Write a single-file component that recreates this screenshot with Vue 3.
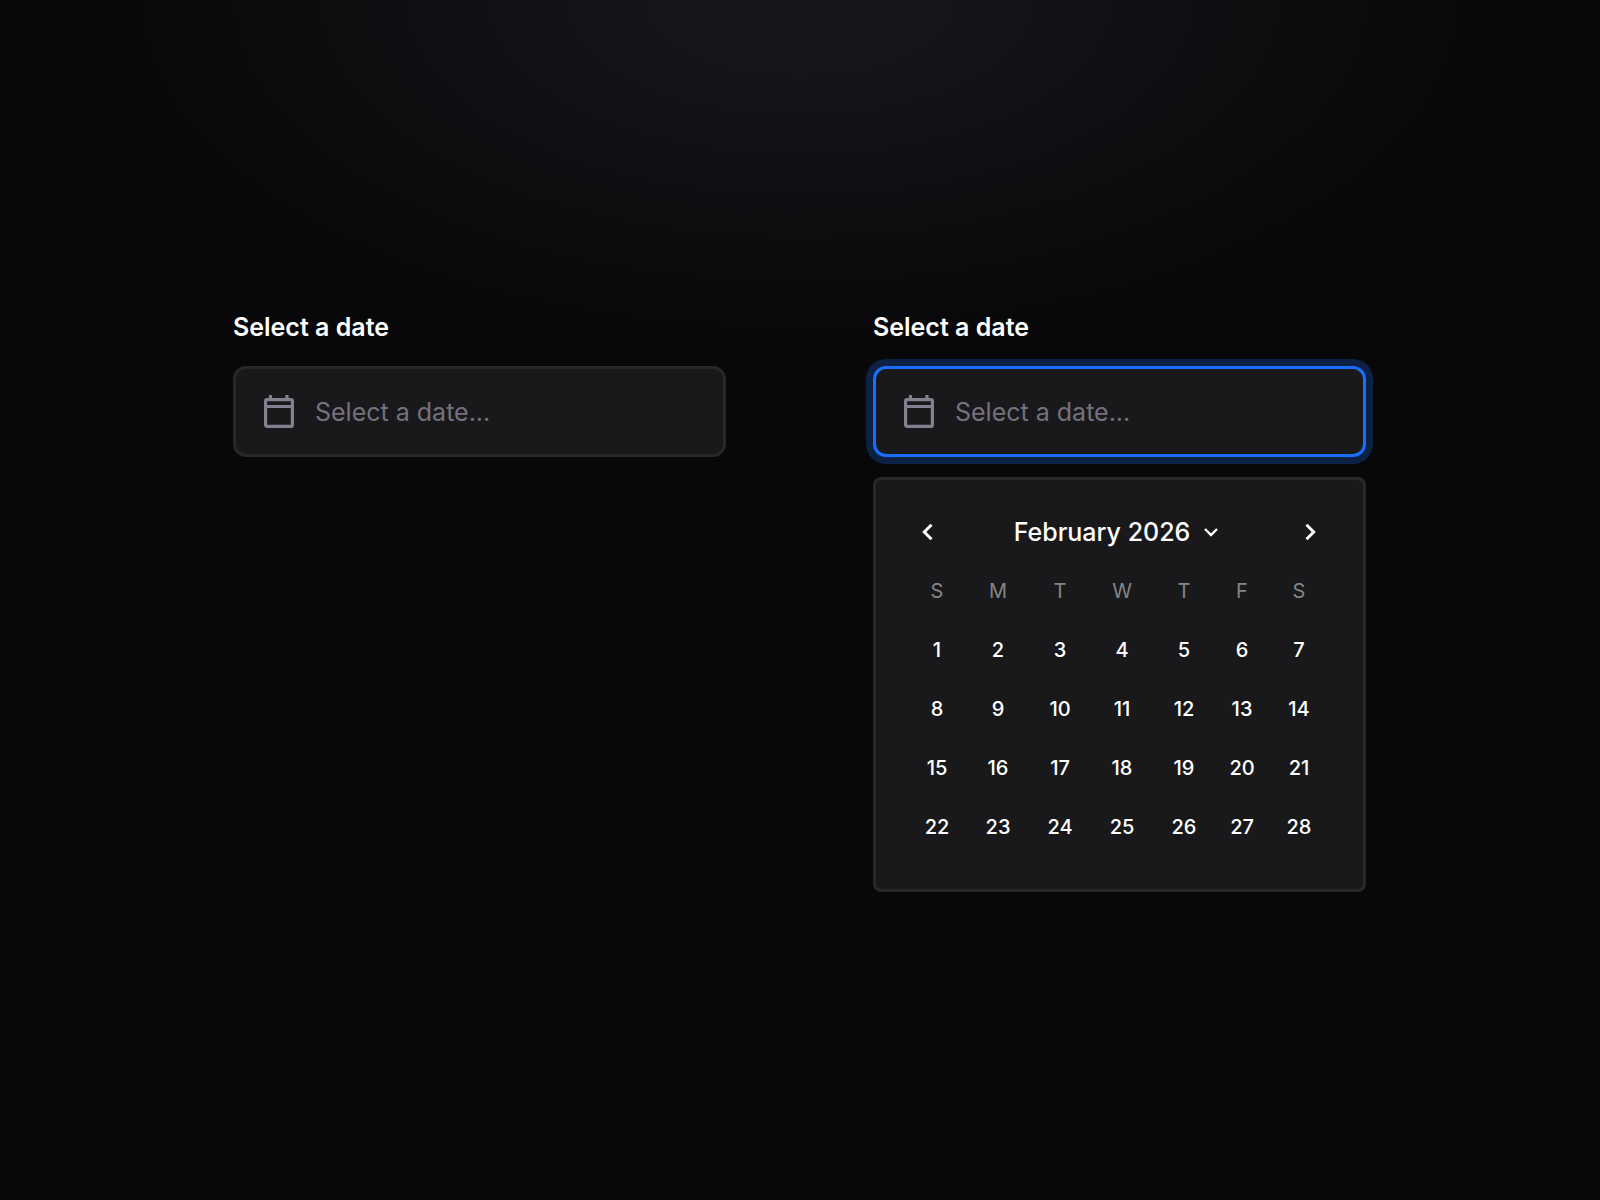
<script setup>
const weekdays = [
  { short: 'S', name: 'Sunday' },
  { short: 'M', name: 'Monday' },
  { short: 'T', name: 'Tuesday' },
  { short: 'W', name: 'Wednesday' },
  { short: 'T', name: 'Thursday' },
  { short: 'F', name: 'Friday' },
  { short: 'S', name: 'Saturday' },
]

const weeks = Array.from({ length: 4 }, (_, w) =>
  Array.from({ length: 7 }, (_, d) => w * 7 + d + 1)
)

const pickers = [
  { id: 'date-closed', open: false },
  { id: 'date-open', open: true },
]
</script>

<template>
  <main class="page">
    <section v-for="picker in pickers" :key="picker.id" class="picker">
      <label class="label" :for="picker.id">Select a date</label>
      <div class="field" :class="{ active: picker.open }">
        <svg class="calendar-icon" viewBox="0 0 30 33" aria-hidden="true">
          <rect x="1.6" y="4.6" width="26.8" height="26.8" rx="1.5" />
          <path d="M1.5 11.5H28.5M6.5 0V4M23 0V4" />
        </svg>
        <input :id="picker.id" class="input" type="text" placeholder="Select a date..." readonly />
      </div>

      <div v-if="picker.open" class="panel">
        <header class="panel-head">
          <button class="nav" type="button" aria-label="Previous month">
            <svg class="icon" viewBox="0 0 24 24"><path d="M16.5 4.8L9.3 12L16.5 19.2" /></svg>
          </button>
          <button class="month" type="button">
            February 2026
            <svg class="icon caret" viewBox="0 0 24 24"><path d="M6 9L12 15L18 9" /></svg>
          </button>
          <button class="nav" type="button" aria-label="Next month">
            <svg class="icon" viewBox="0 0 24 24"><path d="M8.5 4.8L15.7 12L8.5 19.2" /></svg>
          </button>
        </header>
        <table class="days">
          <colgroup>
            <col class="edge" />
            <col span="4" class="mid" />
            <col class="narrow" />
            <col class="edge" />
          </colgroup>
          <thead>
            <tr>
              <th v-for="day in weekdays" :key="day.name" scope="col" :abbr="day.name">{{ day.short }}</th>
            </tr>
          </thead>
          <tbody>
            <tr v-for="(week, i) in weeks" :key="i">
              <td v-for="day in week" :key="day">
                <button class="day" type="button">{{ day }}</button>
              </td>
            </tr>
          </tbody>
        </table>
      </div>
    </section>
  </main>
</template>

<style>
body {
  margin: 0;
  background: #08080a;
}
</style>

<style scoped>
.page {
  box-sizing: border-box;
  min-height: 100vh;
  display: grid;
  grid-template-columns: repeat(auto-fit, minmax(420px, 493px));
  justify-content: center;
  align-content: start;
  gap: 48px 147px;
  padding: 310px 34px 48px 33px;
  background: radial-gradient(ellipse 44% 29% at 50% 0, #17161b, #151419 22%, #101014 50%, #0c0c0e 74%, #08080a) #08080a;
  color: #fff;
  font-family: Inter, "Liberation Sans", sans-serif;
}

.picker {
  display: flex;
  flex-direction: column;
}

.label {
  margin-bottom: 22px;
  font-size: 25px;
  font-weight: 600;
  line-height: 34px;
}

.field {
  box-sizing: border-box;
  display: flex;
  align-items: center;
  gap: 21px;
  height: 91px;
  padding: 0 28px;
  border: 3px solid #28282a;
  border-radius: 13px;
  background: #19191b;
}

.field.active {
  border-color: #196dff;
  box-shadow: 0 0 0 7px #0d2144;
}

.calendar-icon {
  flex: none;
  width: 30px;
  height: 33px;
  fill: none;
  stroke: #83818f;
  stroke-width: 3.2;
}

.input {
  flex: 1;
  min-width: 0;
  padding: 0;
  border: 0;
  outline: 0;
  background: transparent;
  color: #fff;
  font: 400 25px/34px Inter, "Liberation Sans", sans-serif;
}

.input::placeholder {
  color: #74727d;
  opacity: 1;
}

.panel {
  margin-top: 20px;
  padding: 31px 35px 33px 31px;
  border: 3px solid #28282a;
  border-radius: 8px;
  background: #19191b;
}

.panel-head {
  display: flex;
  align-items: center;
  justify-content: space-between;
  height: 42px;
  margin: 0 -2px 8px 0;
}

button {
  padding: 0;
  border: 0;
  background: transparent;
  color: inherit;
  font-family: inherit;
  cursor: pointer;
}

.nav,
.month {
  display: flex;
  align-items: center;
  justify-content: center;
}

.nav {
  width: 40px;
  height: 40px;
}

.month {
  gap: 9px;
  font-size: 25px;
  font-weight: 500;
  line-height: 34px;
}

.icon {
  width: 24px;
  height: 24px;
  fill: none;
  stroke: #fff;
  stroke-width: 3;
}

.caret {
  stroke-width: 2.4;
}

.days {
  width: 100%;
  table-layout: fixed;
  border-collapse: collapse;
}

.edge {
  width: 60px;
}

.mid {
  width: 62px;
}

.narrow {
  width: 54px;
}

th,
td {
  height: 59px;
  padding: 0;
  text-align: center;
  font-size: 20px;
}

th {
  color: #858587;
  font-weight: 400;
}

.day {
  width: 100%;
  height: 40px;
  font-size: 20px;
  font-weight: 500;
}
</style>
